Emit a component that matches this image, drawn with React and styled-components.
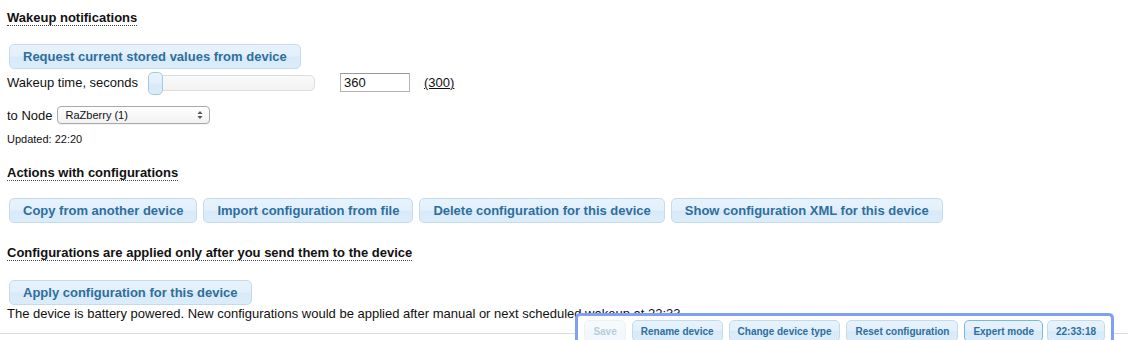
import React from 'react'
import styled, { createGlobalStyle } from 'styled-components'

const GlobalStyle = createGlobalStyle`
  html, body {
    margin: 0;
    padding: 0;
    background: #fff;
    overflow: hidden;
  }
  body {
    font-family: "Liberation Sans", Arial, sans-serif;
    font-size: 13px;
    color: #111;
  }
`;

const Page = styled.div`
  padding: 10px 7px 0;
  height: 340px;
  box-sizing: border-box;
`;

const Title = styled.div`
  display: inline-block;
  font-weight: bold;
  font-size: 13px;
  line-height: 15px;
  border-bottom: 1px dotted #444;
  margin-top: ${p => p.$top || 0}px;
`;

const Btn = styled.button`
  display: inline-flex;
  align-items: center;
  height: ${p => (p.$small ? 22 : 25)}px;
  padding: 0 ${p => (p.$small ? 8 : 13)}px;
  margin: 0 0 0 ${p => (p.$tight ? -2 : 0)}px;
  border: 1px solid ${p => (p.$active ? '#79b7e7' : '#c5dbec')};
  border-radius: 5px;
  background: linear-gradient(#e6f2fc 0%, #e3f0fb 48%, #d8eaf9 52%, #dbecfa 100%);
  color: #2e6e9e;
  font-family: "Liberation Sans", Arial, sans-serif;
  font-weight: bold;
  font-size: ${p => (p.$small ? 10 : 13)}px;
  white-space: nowrap;
  box-sizing: border-box;
  opacity: ${p => (p.disabled ? 0.35 : 1)};
  cursor: pointer;
`;

const Block = styled.div`
  margin-top: ${p => p.$top || 0}px;
  padding-left: 2px;
`;

const Row = styled.div`
  display: flex;
  align-items: center;
  gap: ${p => p.$gap || 0}px;
  margin-top: ${p => p.$top || 0}px;
  padding-left: ${p => p.$indent || 0}px;
`;

const Label = styled.span`
  font-size: 13px;
`;

const SliderTrack = styled.div`
  position: relative;
  width: 167px;
  height: 16px;
  margin-left: 10px;
  border: 1px solid #dcdcdc;
  border-radius: 5px;
  background: linear-gradient(#fafafa, #f3f3f3);
  box-sizing: border-box;
`;

const SliderHandle = styled.div`
  position: absolute;
  left: -1px;
  top: -4px;
  width: 15px;
  height: 23px;
  border: 1px solid #a6c9e2;
  border-radius: 5px;
  background: linear-gradient(#e6f2fc 0%, #e3f0fb 48%, #d8eaf9 52%, #dbecfa 100%);
  box-sizing: border-box;
`;

const NumInput = styled.input`
  width: 70px;
  height: 19px;
  margin-left: 25px;
  padding: 0 3px;
  border: 1px solid #b4b4b4;
  border-top-color: #999;
  font-family: "Liberation Sans", Arial, sans-serif;
  font-size: 13px;
  color: #111;
  box-sizing: border-box;
  outline: none;
`;

const DefaultLink = styled.span`
  margin-left: 14px;
  text-decoration: underline;
  color: #111;
`;

const Select = styled.div`
  display: flex;
  align-items: center;
  justify-content: space-between;
  width: 153px;
  height: 18px;
  padding: 0 6px 0 8px;
  border: 1px solid #a9a9a9;
  border-radius: 4px;
  background: linear-gradient(#ffffff, #f1f1f1);
  box-shadow: 0 1px 0 rgba(0, 0, 0, 0.05);
  font-size: 11px;
  box-sizing: border-box;
`;

const Small = styled.div`
  font-size: 11px;
  line-height: 14px;
  margin-top: ${p => p.$top || 0}px;
`;

const Note = styled.div`
  font-size: 13px;
  line-height: 15px;
  margin-top: ${p => p.$top || 0}px;
  white-space: nowrap;
`;

const Rule = styled.div`
  margin: 12px -7px 0;
  border-top: 1px solid #dadada;
`;

const Footer = styled.div`
  position: fixed;
  right: 14px;
  bottom: -6px;
  display: flex;
  gap: 6px;
  padding: 4px 6px;
  border: 3px solid #819ff5;
  border-bottom: none;
  border-radius: 5px 5px 0 0;
  background: #fff;
`;

const Arrows = () => (
  <svg width="6" height="10" viewBox="0 0 6 10">
    <path d="M0.5 4 L3 1 L5.5 4 Z" fill="#555" />
    <path d="M0.5 6 L3 9 L5.5 6 Z" fill="#555" />
  </svg>
);

const App = () => {
  return (
    <>
      <GlobalStyle />
      <Page>
        <Title>Wakeup notifications</Title>
        <Block $top={18}>
          <Btn>Request current stored values from device</Btn>
        </Block>
        <Row $top={4}>
          <Label>Wakeup time, seconds</Label>
          <SliderTrack>
            <SliderHandle />
          </SliderTrack>
          <NumInput defaultValue="360" />
          <DefaultLink>(300)</DefaultLink>
        </Row>
        <Row $top={14} $gap={4}>
          <Label>to Node</Label>
          <Select>
            <span>RaZberry (1)</span>
            <Arrows />
          </Select>
        </Row>
        <Small $top={8}>Updated: 22:20</Small>
        <div>
          <Title $top={19}>Actions with configurations</Title>
        </div>
        <Row $top={17} $gap={6} $indent={2}>
          <Btn>Copy from another device</Btn>
          <Btn>Import configuration from file</Btn>
          <Btn>Delete configuration for this device</Btn>
          <Btn>Show configuration XML for this device</Btn>
        </Row>
        <div>
          <Title $top={22}>Configurations are applied only after you send them to the device</Title>
        </div>
        <Block $top={19}>
          <Btn>Apply configuration for this device</Btn>
        </Block>
        <Note $top={1}>
          The device is battery powered. New configurations would be applied after manual or next scheduled wakeup at 22:33
        </Note>
        <Rule />
      </Page>
      <Footer>
        <Btn $small disabled>Save</Btn>
        <Btn $small>Rename device</Btn>
        <Btn $small>Change device type</Btn>
        <Btn $small>Reset configuration</Btn>
        <Btn $small $active>Expert mode</Btn>
        <Btn $small $tight>22:33:18</Btn>
      </Footer>
    </>
  )
}

export default App
